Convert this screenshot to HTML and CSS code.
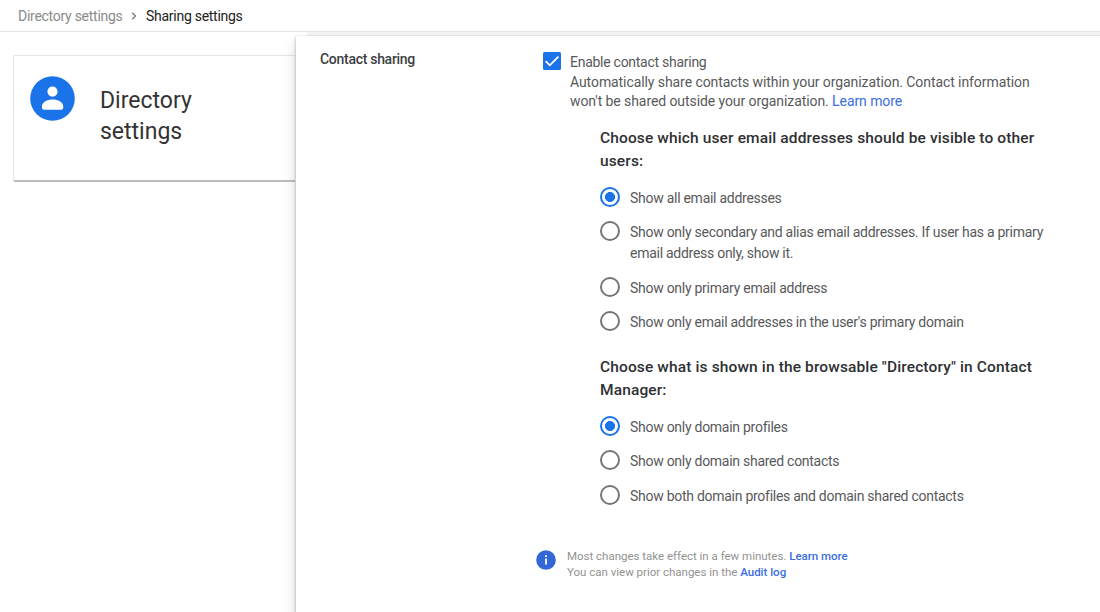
FILE: index.html
```html
<!DOCTYPE html>
<html lang="en">
<head>
<meta charset="utf-8">
<title>Sharing settings</title>
<link rel="stylesheet" href="styles.css">
</head>
<body>
<nav class="breadcrumb">
  <span class="crumb">Directory settings</span>
  <svg class="chevron" viewBox="0 0 6 8"><path d="M1.2.8 4.6 4 1.2 7.2"/></svg>
  <span class="crumb-current">Sharing settings</span>
</nav>
<div class="body">
  <aside class="side">
    <div class="card">
      <svg class="avatar" viewBox="0 0 45 45"><circle cx="22.5" cy="22.5" r="22.3" fill="#1a73e8"/><circle cx="22.5" cy="15.6" r="5.1" fill="#fff"/><path d="M12 30.3c0-4.2 5.4-6.8 10.6-6.8s10.6 2.6 10.6 6.8v1.4a2 2 0 0 1-2 2H14a2 2 0 0 1-2-2z" fill="#fff"/></svg>
      <h1 class="card-title">Directory<br>settings</h1>
    </div>
  </aside>
  <main class="panel">
    <h2 class="section-title">Contact sharing</h2>
    <div class="content">
      <div class="enable">
        <svg class="checkbox" viewBox="0 0 18 18"><rect width="18" height="18" rx="1.5" fill="#1a73e8"/><path d="m2.6 9.2 4.2 4.1 8.6-8.6" fill="none" stroke="#fff" stroke-width="1.8"/></svg>
        <div>
          <div class="enable-label">Enable contact sharing</div>
          <p class="desc">Automatically share contacts within your organization. Contact information<br>won't be shared outside your organization. <a class="link">Learn more</a></p>
        </div>
      </div>
      <section class="group">
        <h3 class="group-title">Choose which user email addresses should be visible to other<br>users:</h3>
        <div class="option"><i class="radio checked"></i><span>Show all email addresses</span></div>
        <div class="option"><i class="radio"></i><span>Show only secondary and alias email addresses. If user has a primary<br>email address only, show it.</span></div>
        <div class="option"><i class="radio"></i><span>Show only primary email address</span></div>
        <div class="option"><i class="radio"></i><span>Show only email addresses in the user's primary domain</span></div>
      </section>
      <section class="group group-directory">
        <h3 class="group-title">Choose what is shown in the browsable "Directory" in Contact<br>Manager:</h3>
        <div class="option"><i class="radio checked"></i><span>Show only domain profiles</span></div>
        <div class="option"><i class="radio"></i><span>Show only domain shared contacts</span></div>
        <div class="option"><i class="radio"></i><span>Show both domain profiles and domain shared contacts</span></div>
      </section>
      <footer class="note">
        <svg class="info" viewBox="0 0 20 20"><circle cx="10" cy="10" r="9.8" fill="#3367d6"/><path d="M9.1 5.2h1.8v1.8H9.1zM9.1 8.6h1.8v6H9.1z" fill="#fff"/></svg>
        <p class="note-text">Most changes take effect in a few minutes. <a class="link strong">Learn more</a><br>You can view prior changes in the <a class="link strong">Audit log</a></p>
      </footer>
    </div>
  </main>
</div>
</body>
</html>
```

FILE: styles.css
```css
* { box-sizing: border-box; }
body {
  margin: 0;
  width: 1100px;
  height: 612px;
  overflow: hidden;
  display: flex;
  flex-direction: column;
  background: #fff;
  font-family: Roboto, sans-serif;
  font-size: 14px;
  letter-spacing: -.27px;
  color: #58595b;
  white-space: nowrap;
}
h1, h2, h3, p { margin: 0; font-weight: 400; }
.breadcrumb {
  height: 32px;
  flex: none;
  display: flex;
  align-items: center;
  padding-left: 18px;
  border-bottom: 1px solid #e2e2e2;
}
.crumb { color: #8a8a8a; width: 105px; }
.crumb-current { color: #212121; }
.chevron { width: 6px; height: 8px; margin: 0 9px 0 8px; fill: none; stroke: #777; stroke-width: 1.2; }
.body {
  flex: 1;
  display: flex;
  background: linear-gradient(#f2f2f2, #f2f2f2) 307px 0 / 793px 5px no-repeat;
}
.side { width: 296px; flex: none; padding: 23px 1px 0 13px; }
.card {
  height: 127px;
  display: flex;
  padding: 22px 0 0 16px;
  border: 1px solid #e6e6e6;
  border-right: 0;
  border-bottom: 2px solid #bdbdbd;
  border-radius: 2px 0 0 2px;
}
.avatar { width: 45px; height: 45px; flex: none; margin-top: -2px; }
.card-title { margin: 7px 0 0 25px; font-size: 23px; line-height: 31px; letter-spacing: 0; color: #333; }
.panel {
  flex: 1;
  position: relative;
  display: flex;
  margin-top: 4px;
  padding-left: 24px;
  background: #fff;
  box-shadow: 0 8px 14px rgba(0, 0, 0, .15), 0 1px 3px rgba(0, 0, 0, .3);
  clip-path: inset(-1px 0 0 -18px);
}
.section-title { width: 216px; flex: none; padding-top: 14px; font-size: 14px; line-height: 18px; font-weight: 500; letter-spacing: -.29px; color: #3c4043; }
.content { flex: 1; }
.enable { display: flex; gap: 9px; padding: 16px 0 0 7px; }
.checkbox { width: 18px; height: 18px; flex: none; }
.enable-label { height: 21px; line-height: 20px; }
.desc { line-height: 19px; letter-spacing: -.08px; }
.link { color: #3a6de0; }
.strong { font-weight: 500; }
.group { padding: 16px 0 0 64px; }
.group-directory { padding-top: 10px; }
.group-title { font-size: 15.5px; line-height: 23px; font-weight: 500; letter-spacing: .13px; color: #2f3033; margin-bottom: 14px; }
.option { display: flex; gap: 10px; margin-bottom: 13.4px; line-height: 21px; }
.option span { padding-top: 1px; margin-bottom: -1px; }
.radio { width: 20px; height: 20px; flex: none; border: 2px solid #747679; border-radius: 50%; }
.checked { border-color: #1a73e8; background: radial-gradient(circle, #1a73e8 4.7px, transparent 5.3px); }
.group-directory .group-title { margin-bottom: 14.4px; }
.note { display: flex; gap: 11px; padding-top: 28.6px; }
.info { width: 20px; height: 20px; margin-top: 2px; }
.note-text { font-size: 11.5px; line-height: 16px; letter-spacing: -.01px; color: #929292; }
```
